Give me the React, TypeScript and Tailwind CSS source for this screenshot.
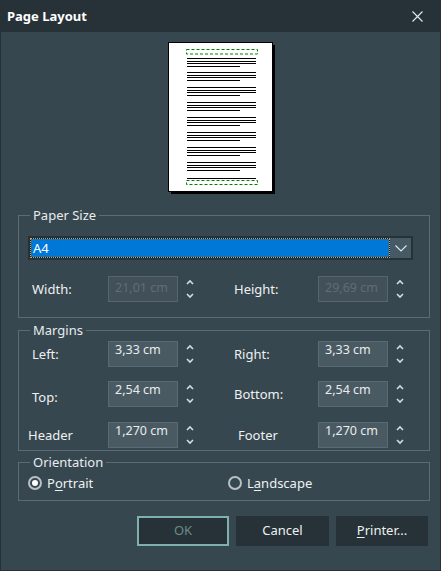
import React from 'react';

const font = { fontFamily: '"Noto Sans", "Open Sans", sans-serif' };

function PagePreview() {
  const groups = [16, 30, 45, 60, 75, 90, 105, 120];
  return (
    <svg width="107" height="152" viewBox="0 0 107 152" className="ml-[167px] mt-[10px] block">
      <rect x="3" y="3" width="104" height="149" fill="#000" />
      <rect x="0.5" y="0.5" width="104" height="149" fill="#fff" stroke="#000" />
      <rect x="18.5" y="7.5" width="71" height="4.5" fill="none" stroke="#008000" strokeDasharray="3 2" />
      {groups.map(y => (
        <g key={y} fill="#000">
          <rect x="19" y={y} width="69" height="1" />
          <rect x="19" y={y + 3} width="69" height="1" />
          <rect x="19" y={y + 5} width="69" height="1" />
          <rect x="19" y={y + 8} width="53" height="1" />
        </g>
      ))}
      <rect x="19" y="136" width="69" height="1" fill="#000" />
      <rect x="18.5" y="138.5" width="71" height="4" fill="none" stroke="#008000" strokeDasharray="3 2" />
    </svg>
  );
}

function Spinner() {
  return (
    <svg width="8" height="26" viewBox="0 0 8 26" className="block">
      <polyline points="1,8 4,5 7,8" fill="none" stroke="#d5dce0" strokeWidth="1.6" />
      <polyline points="1,18 4,21 7,18" fill="none" stroke="#d5dce0" strokeWidth="1.6" />
    </svg>
  );
}

function NumInput({ value, disabled }: { value: string; disabled?: boolean }) {
  return (
    <div
      className={
        disabled
          ? 'w-[70px] h-[26px] border border-[#56666d] bg-[#425159] text-[#5e6e76] text-[12.5px] leading-[14px] pl-[6px] pt-[4px]'
          : 'w-[70px] h-[26px] border border-[#5a6a72] bg-[#4a5a62] text-[#e8ecee] text-[12.5px] leading-[14px] pl-[6px] pt-[1px]'
      }
    >
      {value}
    </div>
  );
}

interface FieldProps {
  label: string;
  value: string;
  disabled?: boolean;
  labelClass: string;
}

function Row({ left, right, className }: { left: FieldProps; right: FieldProps; className?: string }) {
  return (
    <div className={`flex items-center h-[26px] ${className ?? ''}`}>
      <span className={`w-[89px] ${left.labelClass}`}>{left.label}</span>
      <NumInput value={left.value} disabled={left.disabled} />
      <div className="w-[56px] pl-[8px]">
        <Spinner />
      </div>
      <span className={`w-[84px] ${right.labelClass}`}>{right.label}</span>
      <NumInput value={right.value} disabled={right.disabled} />
      <div className="pl-[8px]">
        <Spinner />
      </div>
    </div>
  );
}

function Group({ title, className, children }: { title: string; className?: string; children: React.ReactNode }) {
  return (
    <fieldset className={`ml-[17px] w-[412px] border border-[#5c6c74] ${className ?? ''}`}>
      <legend className="ml-[11px] px-[3px] text-[13px] leading-[16px] text-[#e8ecee]">{title}</legend>
      {children}
    </fieldset>
  );
}

function Radio({ label, u, checked }: { label: [string, string, string]; u?: boolean; checked?: boolean }) {
  return (
    <div className="flex items-center gap-[5px]">
      <span className="w-[14px] h-[14px] rounded-full border-2 border-[#b9c1c5] flex items-center justify-center">
        {checked && <span className="w-[6px] h-[6px] rounded-full bg-white" />}
      </span>
      <span className="text-[13px] leading-[16px] text-[#eef1f2]">
        {label[0]}
        <span className={u === false ? '' : 'underline underline-offset-2'}>{label[1]}</span>
        {label[2]}
      </span>
    </div>
  );
}

export default function App() {
  return (
    <div className="w-[441px] h-[571px] flex flex-col select-none" style={font}>
      <div className="h-[32px] bg-[#263238] flex items-center justify-between pl-[7px] pr-[18px] shrink-0">
        <span className="text-[13px] font-bold text-white leading-none">Page Layout</span>
        <svg width="11" height="11" viewBox="0 0 11 11">
          <path d="M0.5 0.5 L10.5 10.5 M10.5 0.5 L0.5 10.5" stroke="#e6e9eb" strokeWidth="1.1" />
        </svg>
      </div>
      <div className="flex-1 bg-[#37474f] border-x border-b border-[#263238]">
        <PagePreview />

        <Group title="Paper Size" className="mt-[13px] pb-[15px]">
          <div className="ml-[9px] mt-[13px] w-[385px] h-[24px] border-2 border-[#263238] bg-[#455a64] flex">
            <div className="flex-1 bg-[#1b1b1b]">
              <div className="h-full border border-dotted border-[#f39a2e] bg-[#0078d7] bg-clip-padding text-white text-[13px] leading-[18px] pl-[2px]">
                A4
              </div>
            </div>
            <div className="w-[21px] flex items-center justify-center">
              <svg width="12" height="7" viewBox="0 0 12 7">
                <polyline points="0.5,0.5 6,6 11.5,0.5" fill="none" stroke="#e3e8ea" strokeWidth="1.1" />
              </svg>
            </div>
          </div>
          <Row
            className="mt-[16px] text-[13px] leading-[16px] text-[#eef1f2]"
            left={{ label: 'Width:', value: '21,01 cm', disabled: true, labelClass: 'pl-[13px]' }}
            right={{ label: 'Height:', value: '29,69 cm', disabled: true, labelClass: '' }}
          />
        </Group>

        <Group title="Margins" className="mt-[4px] pb-[2px]">
          <div className="text-[13px] leading-[16px] text-[#eef1f2]">
            <Row
              className="mt-[3px]"
              left={{ label: 'Left:', value: '3,33 cm', labelClass: 'pl-[13px]' }}
              right={{ label: 'Right:', value: '3,33 cm', labelClass: '' }}
            />
            <Row
              className="mt-[14px]"
              left={{ label: 'Top:', value: '2,54 cm', labelClass: 'pl-[13px] pt-[6px]' }}
              right={{ label: 'Bottom:', value: '2,54 cm', labelClass: '' }}
            />
            <Row
              className="mt-[15px]"
              left={{ label: 'Header', value: '1,270 cm', labelClass: 'pl-[9px]' }}
              right={{ label: 'Footer', value: '1,270 cm', labelClass: 'pl-[4px]' }}
            />
          </div>
        </Group>

        <Group title="Orientation" className="mt-[3px] pb-[4px]">
          <div className="h-[26px] flex items-center pl-[9px]">
            <div className="w-[200px]">
              <Radio label={['P', 'o', 'rtrait']} checked />
            </div>
            <Radio label={['L', 'a', 'ndscape']} />
          </div>
        </Group>

        <div className="ml-[17px] w-[412px] mt-[15px] flex justify-end gap-[7px] pr-[2px] text-[13px]">
          <button className="w-[92px] h-[30px] bg-[#263238] border-2 border-[#7fb1ac] text-[#6b8a89]">OK</button>
          <button className="w-[93px] h-[30px] bg-[#263238] text-[#eef1f2]">Cancel</button>
          <button className="w-[92px] h-[30px] bg-[#263238] text-[#eef1f2]">
            <span className="underline underline-offset-2">P</span>rinter...
          </button>
        </div>
      </div>
    </div>
  );
}
